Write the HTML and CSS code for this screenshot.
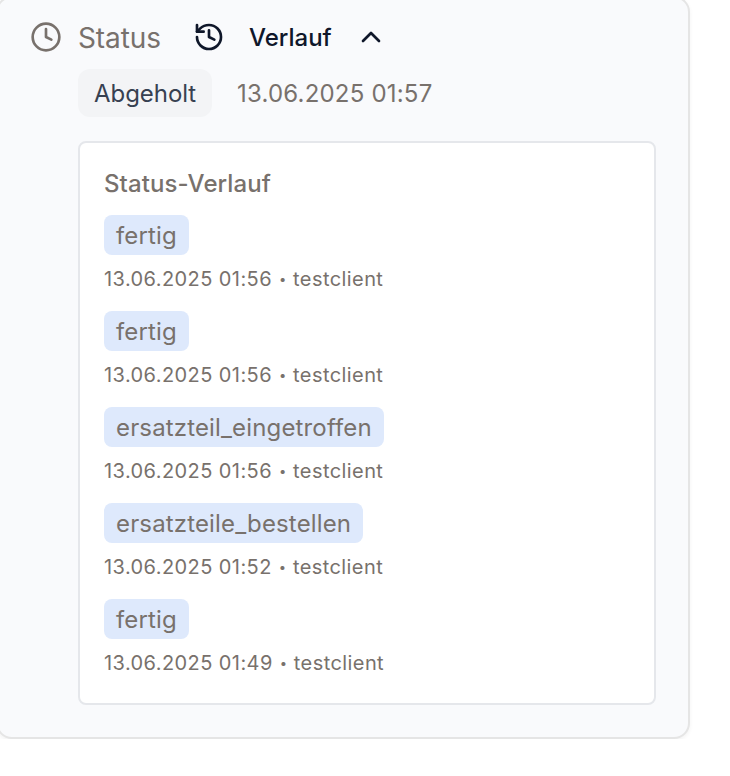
FILE: index.html
```html
<!DOCTYPE html>
<html lang="de">
<head>
<meta charset="utf-8">
<title>Status</title>
<link rel="stylesheet" href="styles.css">
</head>
<body>
<section class="card">
  <header class="head">
    <svg class="icon clock" viewBox="0 0 24 24"><circle cx="12" cy="12" r="10"/><path d="M12 6v6l4 2"/></svg>
    <h2 class="title">Status</h2>
    <button class="toggle">
      <svg class="icon history" viewBox="0 0 24 24"><path d="M3 12a9 9 0 1 0 9-9 9.75 9.75 0 0 0-6.74 2.74L3 8"/><path d="M3 3v5h5"/><path d="M12 7v5l4 2"/></svg>
      <span class="toggle-label">Verlauf</span>
      <svg class="icon chevron" viewBox="0 0 24 24"><path d="m18 15-6-6-6 6"/></svg>
    </button>
  </header>
  <div class="current">
    <span class="badge">Abgeholt</span>
    <time class="when">13.06.2025 01:57</time>
  </div>
  <div class="panel">
    <h3 class="panel-title">Status-Verlauf</h3>
    <ul class="list">
      <li class="item"><span class="tag">fertig</span><p class="meta">13.06.2025 01:56 <span class="dot">•</span> testclient</p></li>
      <li class="item"><span class="tag">fertig</span><p class="meta">13.06.2025 01:56 <span class="dot">•</span> testclient</p></li>
      <li class="item"><span class="tag">ersatzteil_eingetroffen</span><p class="meta">13.06.2025 01:56 <span class="dot">•</span> testclient</p></li>
      <li class="item"><span class="tag">ersatzteile_bestellen</span><p class="meta">13.06.2025 01:52 <span class="dot">•</span> testclient</p></li>
      <li class="item"><span class="tag">fertig</span><p class="meta">13.06.2025 01:49 <span class="dot">•</span> testclient</p></li>
    </ul>
  </div>
</section>
</body>
</html>
```
FILE: styles.css
```css
* { box-sizing: border-box; margin: 0; padding: 0; }
body { background: #fff; color: #78716c; font-family: Inter, sans-serif; font-size: 24px; line-height: 32px; }
.card { width: 694px; height: 743px; margin: -4px 0 0 -4px; padding: 19px 32px 0 34px; background: #f9fafc; border: 2px solid #e5e5e5; border-radius: 16px; box-shadow: 0 2px 4px rgba(0,0,0,.05); }
.head { display: flex; align-items: center; height: 40px; }
.icon { fill: none; stroke: currentColor; stroke-width: 2; stroke-linecap: round; stroke-linejoin: round; flex: none; }
.clock { width: 32px; height: 32px; margin-left: -2px; }
.title { width: 83px; margin-left: 16px; padding-top: 2px; font-size: 28px; font-weight: 400; line-height: 38px; letter-spacing: -.1px; }
.toggle { display: flex; align-items: center; margin-left: 32px; border: 0; background: none; color: #0f172a; font: 500 24px/32px Inter, sans-serif; }
.history { width: 32px; height: 32px; }
.toggle-label { margin: 0 23px 0 24px; padding-top: 2px; line-height: 30px; }
.chevron { width: 32px; height: 32px; }
.current { display: flex; align-items: center; gap: 24px; margin: 12px 0 24px 46px; }
.badge { width: 134px; padding: 9px 16px 7px; background: #f3f4f6; color: #374151; border-radius: 12px; letter-spacing: -.05px; }
.when { padding: 1px 0 0 1px; letter-spacing: .2px; }
.panel { width: 578px; height: 564px; margin-left: 46px; padding: 25px 24px 24px; background: #fff; border: 2px solid #e5e7eb; border-radius: 8px; }
.panel-title { font-size: 24px; font-weight: 500; line-height: 32px; margin-bottom: 15px; letter-spacing: .1px; }
.list { list-style: none; display: grid; gap: 16px; }
.item { height: 80px; }
.tag { display: block; width: fit-content; height: 40px; padding: 5px 12px 3px; background: #dee9fc; border-radius: 8px; letter-spacing: .15px; }
.meta { margin-top: 8px; font-size: 20px; line-height: 32px; letter-spacing: .42px; }
.dot { display: inline-block; width: 9px; font-size: 13px; line-height: 1; text-align: center; vertical-align: 2px; letter-spacing: 0; }
```
